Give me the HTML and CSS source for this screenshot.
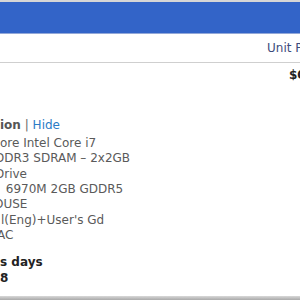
FILE: index.html
```html
<!DOCTYPE html>
<html>
<head>
<meta charset="utf-8">
<link rel="stylesheet" href="styles.css">
</head>
<body>
<div class="page">
  <div class="topline"></div>
  <div class="titlebar"></div>
  <div class="colhead"><span class="colhead-label">Unit Price</span></div>
  <div class="pricerow"><span class="price">$0.00</span></div>
  <div class="desc">
    <div class="desc-head"><b class="desc-title">ion</b> <span class="sep">|</span> <a class="hide">Hide</a></div>
    <div class="lines">
      <div class="line">ore Intel Core i7</div>
      <div class="line cut5">DDR3 SDRAM – 2x2GB</div>
      <div class="line cut5">Drive</div>
      <div class="line shift2">&nbsp;6970M 2GB GDDR5</div>
      <div class="line cut6">OUSE</div>
      <div class="line shift1">l(Eng)+User's Gd</div>
      <div class="line cut3">AC</div>
    </div>
    <div class="ship">
      <div class="line strong">s days</div>
      <div class="line strong">8</div>
    </div>
  </div>
  <div class="footbar"></div>
</div>
</body>
</html>
```

FILE: styles.css
```css
html, body {
  margin: 0;
  padding: 0;
  background: #ffffff;
}
.page {
  width: 300px;
  height: 300px;
  overflow: hidden;
  font-family: "DejaVu Sans", Verdana, sans-serif;
  font-size: 12px;
  color: #5a5a5a;
  display: flex;
  flex-direction: column;
}
.topline {
  height: 2px;
  background: #d6d6d6;
  flex: none;
}
.titlebar {
  height: 31px;
  background: #3364c8;
  border-bottom: 1px solid #93a8d8;
  flex: none;
}
.colhead {
  height: 28px;
  border-bottom: 1px solid #cfcfcf;
  padding-left: 267px;
  line-height: 28px;
  white-space: nowrap;
  flex: none;
  color: #3d4b7c;
}
.pricerow {
  padding-top: 5px;
  padding-left: 289px;
  line-height: 15px;
  white-space: nowrap;
  flex: none;
}
.price {
  font-weight: bold;
  color: #222222;
}
.desc {
  margin-top: 35px;
  white-space: nowrap;
  flex: none;
}
.desc-head {
  line-height: 15px;
}
.desc-title {
  color: #555555;
}
.sep {
  color: #666666;
}
.hide {
  color: #2b7cc6;
}
.lines {
  margin-top: 3px;
}
.line {
  line-height: 15.33px;
}
.cut5 { margin-left: -5px; }
.cut6 { margin-left: -6px; }
.cut3 { margin-left: -3px; }
.shift1 { margin-left: 1px; }
.shift2 { margin-left: 2px; }
.ship {
  margin-top: 12px;
}
.strong {
  font-weight: bold;
  color: #222222;
}
.footbar {
  margin-top: auto;
  height: 4px;
  background: linear-gradient(#d8d8d8, #a9a9a9);
  flex: none;
}
```
